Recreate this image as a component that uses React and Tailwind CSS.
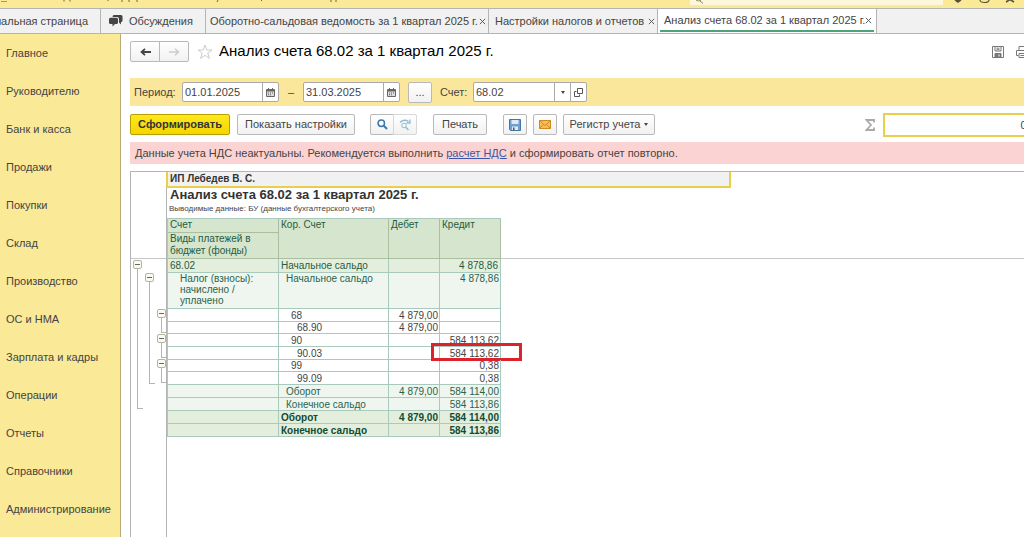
import React from "react";

const sections = [
  "Главное", "Руководителю", "Банк и касса", "Продажи", "Покупки", "Склад",
  "Производство", "ОС и НМА", "Зарплата и кадры", "Операции", "Отчеты",
  "Справочники", "Администрирование",
];

const button =
  "flex h-[21px] items-center justify-center rounded-xs border border-[#b9b9b9] bg-linear-to-b from-white to-[#f1f1f1] text-[#444]";

function TopStrip() {
  return (
    <header className="flex h-2 shrink-0 overflow-hidden bg-[#fae997]">
      <svg className="h-2 w-[350px]" viewBox="0 0 350 8" fill="none" stroke="#6b654a">
        <path d="M1 1.500h6" stroke="#a39a68" />
        <path d="M64 0v1.500M70 0v1.500M108 0v1M122 0v2M129 0v2M137 0v2M218 0l-1 2M262 0l-1 1M331 0v2M336 0v2" />
      </svg>
      <div className="ml-auto flex h-[5px] w-[253px] bg-[#fdf8da]">
        <svg className="ml-1 h-[5px] w-2.5" viewBox="0 0 10 5" fill="none" stroke="#8c8663"><path d="M2 0a3 2 0 0 0 5 0M6 1l3 2.500" /></svg>
        <input aria-label="Поиск" className="w-0 flex-1 outline-none" />
      </div>
      <svg className="ml-2 h-2 w-[73px]" viewBox="0 0 73 8" fill="none" stroke="#55513c" strokeWidth="1.500">
        <path d="M4 0l3 2 3-2" fill="#55513c" />
        <path d="M29 0a4.500 2.500 0 0 0 9 0" strokeWidth="1.200" />
        <path d="M55 2l4-2.500 4 2.500" />
      </svg>
    </header>
  );
}

function Close({ label }) {
  return (
    <button aria-label={"Закрыть " + label} className="flex w-[7px] items-center">
      <svg viewBox="0 0 8 8" className="size-[7px]" stroke="#555" strokeWidth="1.100"><path d="M1 1l6 6M7 1L1 7" /></svg>
    </button>
  );
}

function Tabs() {
  return (
    <nav className="flex h-[26px] shrink-0 overflow-hidden border-y border-[#b4b4b4] bg-[#f1f1f1] text-[11px] whitespace-nowrap text-[#444]">
      <div className="flex w-[101px] shrink-0 items-center justify-end border-r border-[#b4b4b4] pr-3">
        <a href="#home">Начальная страница</a>
      </div>
      <div className="flex w-[105px] shrink-0 items-center gap-1.5 border-r border-[#b4b4b4] pl-2">
        <svg viewBox="0 0 14 12" className="h-3 w-3.5" fill="#444">
          <path d="M5 0h7q1.500 0 1.500 1.500v4q0 1.500-1.500 1.500v2.500L10 7.500V4Q10 2 8 2H3.500Q3.500 0 5 0z" />
          <path d="M1.500 2.700h6Q9 2.700 9 4.200v3.300Q9 9 7.500 9H6l-2.500 2.500V9h-2Q0 9 0 7.500V4.200Q0 2.700 1.500 2.700z" />
        </svg>
        <a href="#talk">Обсуждения</a>
      </div>
      <div className="flex w-[283px] shrink-0 items-center justify-between border-r border-[#b4b4b4] pr-0.5 pl-1">
        <a href="#osv">Оборотно-сальдовая ведомость за 1 квартал 2025 г.</a>
        <Close label="ведомость" />
      </div>
      <div className="flex w-[169px] shrink-0 items-center justify-between border-r border-[#b4b4b4] pr-0.5 pl-1.5">
        <a href="#tax">Настройки налогов и отчетов</a>
        <Close label="настройки" />
      </div>
      <div className="flex w-[219px] shrink-0 border-r border-[#b4b4b4] bg-white px-0.5 pb-px">
        <div className="flex flex-1 items-center justify-between border-b-2 border-[#4fa37c] pt-0.5 pr-0.5 pl-1">
          <a href="#analysis">Анализ счета 68.02 за 1 квартал 2025 г.</a>
          <Close label="анализ счета" />
        </div>
      </div>
    </nav>
  );
}

function CalendarIcon() {
  return (
    <svg viewBox="0 0 9 9" className="size-[9px]" fill="#666">
      <path d="M1 1h1V0h1v1h3V0h1v1h1q1 0 1 1v6q0 1-1 1H1Q0 9 0 8V2q0-1 1-1z" />
      <path d="M1 3.500h7V8H1z" fill="#ddd" />
      <path d="M2 4.500h1v1H2zM4 4.500h1v1H4zM6 4.500h1v1H6zM2 6.300h1v1H2zM4 6.300h1v1H4z" />
    </svg>
  );
}

function DateField({ label, value }) {
  return (
    <div className="flex h-5 w-[97px] overflow-hidden rounded-xs border border-[#aaa] bg-white">
      <input aria-label={label} defaultValue={value} className="w-0 flex-1 pl-0.5 outline-none" />
      <button aria-label={"Календарь: " + label} className="flex w-4 items-center justify-center border-l border-[#aaa]">
        <CalendarIcon />
      </button>
    </div>
  );
}

function PeriodBar() {
  return (
    <div className="mt-4 flex h-7 items-center bg-[#fbe79b] pl-1 text-[11px] text-[#444]">
      <span className="w-12">Период:</span>
      <DateField label="Начало периода" value="01.01.2025" />
      <span className="w-6 text-center">–</span>
      <DateField label="Конец периода" value="31.03.2025" />
      <button aria-label="Выбрать период" className={button + " ml-2 w-6"}>...</button>
      <label htmlFor="account" className="w-[41px] pl-2">Счет:</label>
      <div className="flex h-5 w-[114px] overflow-hidden rounded-xs border border-[#aaa] bg-white">
        <input id="account" defaultValue="68.02" className="w-0 flex-1 pl-0.5 outline-none" />
        <button aria-label="Список счетов" className="flex w-4 items-center justify-center border-l border-[#aaa]">
          <svg viewBox="0 0 4 3" className="h-[3px] w-1" fill="#444"><path d="M0 0h4L2 3z" /></svg>
        </button>
        <button aria-label="Открыть счет" className="flex w-4 items-center justify-center border-l border-[#aaa]">
          <svg viewBox="0 0 9 9" className="size-[9px]" fill="none" stroke="#555"><path d="M3.500.5h5v5h-5zM2.500 3.500h-2v5h5v-2" /></svg>
        </button>
      </div>
    </div>
  );
}

function Toolbar() {
  return (
    <div className="mt-2 flex h-[21px] items-center text-[11px]">
      <button className="h-[21px] w-[100px] rounded-xs border border-[#b89f00] bg-linear-to-b from-[#ffe81a] to-[#f3d500] font-bold text-[#333]">Сформировать</button>
      <button className={button + " ml-[7px] w-[118px]"}>Показать настройки</button>
      <button aria-label="Найти" className={button + " ml-[15px] w-6 rounded-r-none"}>
        <svg viewBox="0 0 11 11" className="size-[11px]" fill="none" stroke="#3b78ab"><circle cx="4.300" cy="4.300" r="3.200" strokeWidth="1.500" /><path d="M6.800 6.800L10 10" strokeWidth="2" /></svg>
      </button>
      <button aria-label="Найти далее" className={button + " -ml-px w-6 rounded-l-none border-[#d8d8d8]"}>
        <svg viewBox="0 0 12 12" className="size-3" fill="none" stroke="#8dbbd2"><circle cx="5" cy="6.500" r="2.300" /><path d="M6.800 8.300L9.500 11" strokeWidth="1.500" /><path d="M1 3.500Q5-.5 9.500 2.500M11 .5v3.500H7.500" strokeWidth="1.300" /></svg>
      </button>
      <button className={button + " ml-4 w-[54px]"}>Печать</button>
      <button aria-label="Сохранить" className={button + " ml-4 w-6"}>
        <svg viewBox="0 0 12 12" className="size-3"><path d="M.5.5h11v11H1.500l-1-1z" fill="#6f9fce" stroke="#4575a5" /><path d="M2.500 1h7v4h-7z" fill="#dcebf6" /><path d="M3 7.500h6V11H3z" fill="#e8e8e8" /><path d="M4 8.500h1.500V11H4z" fill="#456" /></svg>
      </button>
      <button aria-label="Отправить" className={button + " ml-1.5 w-6"}>
        <svg viewBox="0 0 12 9" className="h-[9px] w-3" stroke="#cf8b22"><path d="M.5.5h11v8H.5z" fill="#f6bd55" /><path d="M.5.5L6 5.500l5.500-5M.5 8.500l4-4M11.500 8.500l-4-4" fill="none" /></svg>
      </button>
      <button className={button + " ml-1.5 w-[92px] gap-1"}>
        Регистр учета
        <svg viewBox="0 0 4 3" className="h-[3px] w-1" fill="#444"><path d="M0 0h4L2 3z" /></svg>
      </button>
      <div className="ml-auto flex items-center gap-2">
        <svg viewBox="0 0 10 12" className="h-3 w-2.5" fill="none" stroke="#aaa" strokeWidth="1.800"><path d="M9 3.500V1H1.500L6 6l-4.500 5H9V8.500" /></svg>
        <input aria-label="Сумма" readOnly defaultValue="0,00" className="-mr-5 h-6 w-[161px] border-2 border-[#e9cf4c] bg-white text-right text-[#444] outline-none" />
      </div>
    </div>
  );
}

function Bracket({ line, gap = "" }) {
  return (
    <div className={gap}>
      <button aria-label="Свернуть группу" className="flex size-[9px] items-center justify-center rounded-xs border border-[#b5b59b] bg-[#fafaf2]">
        <span className="h-px w-[5px] bg-[#666]" />
      </button>
      <div className={"ml-1 w-1.5 border-b border-l border-[#b4b4b4] " + line} />
    </div>
  );
}

function Outline() {
  return (
    <div className="w-9 shrink-0 border-r border-[#b4b4b4]">
      <div className="h-[87px] border-b border-[#c8c8c8]" />
      <div className="flex gap-[3px] pl-0.5">
        <div className="w-[9px] pt-px"><Bracket line="h-[140px]" /></div>
        <div className="w-[9px] pt-3.5"><Bracket line="h-[102px]" /></div>
        <div className="w-[9px] pt-[50px]">
          <Bracket line="h-[15px]" />
          <Bracket line="h-[15px]" gap="mt-px" />
          <Bracket line="h-[15px]" gap="mt-px" />
        </div>
      </div>
    </div>
  );
}

const tones = {
  plain: "h-[13px] text-[#444]",
  short: "h-3 text-[#444]",
  light: "h-[13px] bg-[#eff5ef] text-[#28644c]",
  total: "h-[13px] bg-[#e3efdc] font-bold text-[#124a34]",
};

const rows = [
  ["plain", "pl-3", "68", "4 879,00", ""],
  ["short", "pl-[18px]", "68.90", "4 879,00", ""],
  ["plain", "pl-3", "90", "", "584 113,62"],
  ["plain", "pl-[18px]", "90.03", "", "584 113,62", true],
  ["short", "pl-3", "99", "", "0,38"],
  ["plain", "pl-[18px]", "99.09", "", "0,38"],
  ["light", "pl-[7px]", "Оборот", "4 879,00", "584 114,00"],
  ["light", "pl-[7px]", "Конечное сальдо", "", "584 113,86"],
  ["total", "pl-0.5", "Оборот", "4 879,00", "584 114,00"],
  ["total", "pl-0.5", "Конечное сальдо", "", "584 113,86"],
];

const cell = "border-r border-b border-[#a9c9bd] p-0 ";
const head = "border-r border-b border-[#a9bfa0] p-0 pl-0.5 text-left align-top font-normal ";

function Report() {
  return (
    <table className="table-fixed border-separate border-spacing-0 border-t border-l border-[#a9c9bd] text-[10px] leading-[11px] whitespace-nowrap">
      <colgroup>
        <col className="w-[111px]" /><col className="w-[110px]" /><col className="w-[51px]" /><col className="w-[61px]" />
      </colgroup>
      <thead className="bg-[#d6e5cd] leading-3 text-[#1f5c43]">
        <tr className="h-3.5">
          <th className={head}>Счет</th>
          <th rowSpan={2} className={head}>Кор. Счет</th>
          <th rowSpan={2} className={head}>Дебет</th>
          <th rowSpan={2} className={head}>Кредит</th>
        </tr>
        <tr className="h-[26px]"><th className={head}>Виды платежей в<br />бюджет (фонды)</th></tr>
      </thead>
      <tbody>
        <tr className="h-3.5 bg-[#e3efdc] text-[#1f5c43]">
          <td className={cell + "pl-0.5"}>68.02</td>
          <td className={cell + "pl-0.5"}>Начальное сальдо</td>
          <td className={cell} />
          <td className={cell + "pr-0.5 text-right"}>4 878,86</td>
        </tr>
        <tr className="h-9 bg-[#eff5ef] align-top text-[#28644c]">
          <td className={cell + "pl-3"}>Налог (взносы):<br />начислено /<br />уплачено</td>
          <td className={cell + "pl-[7px]"}>Начальное сальдо</td>
          <td className={cell} />
          <td className={cell + "pr-px text-right"}>4 878,86</td>
        </tr>
        {rows.map(([tone, pad, name, debit, credit, marked], i) => (
          <tr key={i} className={tones[tone]}>
            <td className={cell} />
            <td className={cell + pad}>{name}</td>
            <td className={cell + "pr-px text-right"}>{debit}</td>
            <td className={cell + "relative pr-px text-right"}>
              {credit}
              {marked && <span className="absolute -top-1 -left-[9px] h-[18px] w-[91px] border-3 border-[#dc222b]" />}
            </td>
          </tr>
        ))}
      </tbody>
    </table>
  );
}

function Sheet() {
  return (
    <section className="mt-[7px] flex flex-1 border-t border-l border-[#b4b4b4]">
      <Outline />
      <div className="min-w-0 flex-1">
        <div className="-ml-px h-4 w-[565px] border-r-2 border-b-2 border-l-2 border-[#e9cf4c] bg-[#f1f1f1] pl-0.5 text-[10px] leading-[14px] font-bold text-[#333]">ИП Лебедев В. С.</div>
        <h2 className="pl-[3px] text-[13px] leading-[14px] font-bold text-[#333]">Анализ счета 68.02 за 1 квартал 2025 г.</h2>
        <p className="h-4 pl-0.5 text-[8px] leading-[14px] text-[#444]">Выводимые данные: БУ (данные бухгалтерского учета)</p>
        <div className="flex items-start">
          <Report />
          <div className="h-[41px] flex-1 border-b border-[#c8c8c8]" />
        </div>
      </div>
    </section>
  );
}

export default function App() {
  return (
    <div className="flex h-screen flex-col overflow-hidden bg-white font-['Liberation_Sans',Arial,sans-serif]">
      <TopStrip />
      <Tabs />
      <div className="flex min-h-0 flex-1">
        <aside className="w-[121px] shrink-0 border-r border-[#b9ab73] bg-[#fae997] text-[11px] text-[#444]">
          {sections.map((s) => (
            <a key={s} href="#section" className="flex h-[38px] items-center pl-1.5">{s}</a>
          ))}
        </aside>
        <main className="flex min-w-0 flex-1 flex-col pt-[7px] pl-[9px]">
          <div className="flex h-[21px] items-center">
            <button aria-label="Назад" className={button + " w-[30px] rounded-r-none"}>
              <svg viewBox="0 0 11 8" className="h-2 w-[11px]" fill="none" stroke="#444" strokeWidth="1.800"><path d="M11 4H2M5 .8L1.500 4 5 7.200" /></svg>
            </button>
            <button aria-label="Вперед" className={button + " -ml-px w-[30px] rounded-l-none"}>
              <svg viewBox="0 0 11 8" className="h-2 w-[11px]" fill="none" stroke="#ccc" strokeWidth="1.500"><path d="M0 4h9M6 .8L9.500 4 6 7.200" /></svg>
            </button>
            <button aria-label="В избранное" className="ml-2">
              <svg viewBox="0 0 16 16" className="size-4" fill="none" stroke="#ccc"><path d="M8 1l1.800 5H15l-4.200 3.200L12.400 14.500 8 11.300l-4.400 3.200L5.200 9.200 1 6h5.200z" /></svg>
            </button>
            <h1 className="ml-1.5 text-[15px] text-black">Анализ счета 68.02 за 1 квартал 2025 г.</h1>
            <div className="-mr-1 ml-auto flex gap-3 overflow-hidden">
              <button aria-label="Сохранить в файл">
                <svg viewBox="0 0 12 12" className="size-3" fill="none" stroke="#777"><path d="M.5.5h11v11H.5zM3 .5V5h6V.5M4.500 2.200h3M4.500 3.700h3" /><path d="M3 7.500h6V11H3z" fill="#777" /><path d="M7 8.500v2" stroke="#fff" /></svg>
              </button>
              <button aria-label="Распечатать">
                <svg viewBox="0 0 12 12" className="size-3" fill="none" stroke="#777"><path d="M3 4V.5h7V4M2.500 9.500h-2v-5h11v5h-2M3 7.500h7v4H3zM4.500 9.500h4" /></svg>
              </button>
            </div>
          </div>
          <PeriodBar />
          <Toolbar />
          <p className="mt-[7px] h-[22px] bg-[#fbd3d3] pl-[5px] text-[11px] leading-[22px] text-[#444]">
            Данные учета НДС неактуальны. Рекомендуется выполнить <a href="#vat" className="text-[#3a55a5] underline">расчет НДС</a> и сформировать отчет повторно.
          </p>
          <Sheet />
        </main>
      </div>
    </div>
  );
}
